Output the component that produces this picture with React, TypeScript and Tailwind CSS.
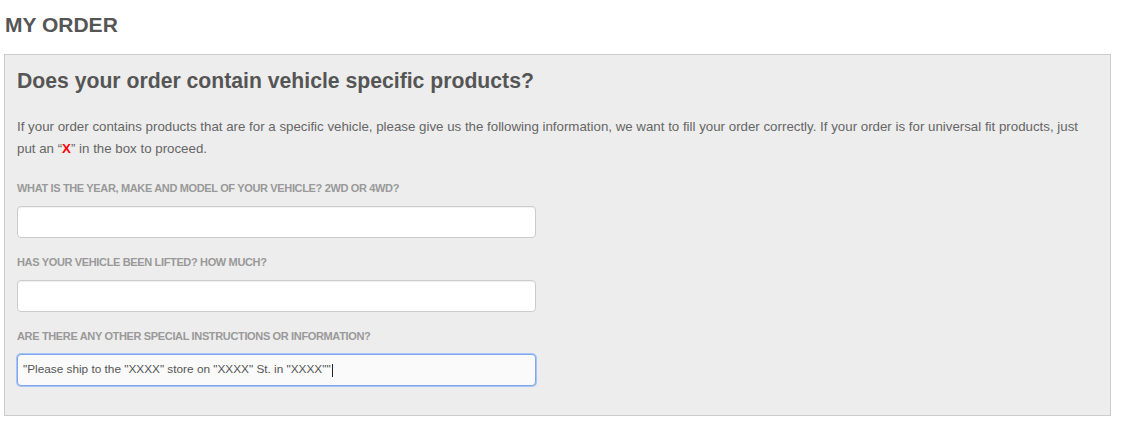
// Order form: vehicle specific products panel
const font = { fontFamily: '"Liberation Sans", Arial, sans-serif' };

type FieldProps = {
  label: string;
  children: React.ReactNode;
};

function Field({ label, children }: FieldProps) {
  return (
    <div className="mt-[17px] first:mt-[21px]">
      <label className="block text-[11px] leading-[14px] font-bold uppercase tracking-[-0.35px] text-[#999]">
        {label}
      </label>
      <div className="mt-[11px]">{children}</div>
    </div>
  );
}

function TextBox() {
  return (
    <div className="h-[32px] w-[519px] rounded-[4px] border border-[#ccc] bg-white shadow-[inset_0_1px_1px_rgba(0,0,0,0.06)]" />
  );
}

export default function App() {
  return (
    <div className="min-h-[422px] bg-white pl-[4px] pr-[12px] pt-[13px]" style={font}>
      {/* Page title */}
      <h1 className="pl-[1px] text-[21px] leading-[24px] font-bold text-[#555]">MY ORDER</h1>

      {/* Panel */}
      <div className="mt-[17px] border border-[#ccc] bg-[#ededed] px-[12px] pt-[12px] pb-[29px]">
        <h2 className="text-[21.2px] leading-[28px] font-bold text-[#555]">
          Does your order contain vehicle specific products?
        </h2>

        <p className="mt-[21px] text-[13.3px] leading-[22px] text-[#666]">
          If your order contains products that are for a specific vehicle, please give us the
          following information, we want to fill your order correctly. If your order is for
          universal fit products, just
          <br />
          put an “<span className="font-bold text-[#f00]">X</span>” in the box to proceed.
        </p>

        <div className="flex flex-col">
          <Field label="What is the year, make and model of your vehicle? 2WD or 4WD?">
            <TextBox />
          </Field>
          <Field label="Has your vehicle been lifted? How much?">
            <TextBox />
          </Field>
          <Field label="Are there any other special instructions or information?">
            <div className="flex h-[32px] w-[519px] items-center rounded-[4px] border border-[#7fa7ee] bg-[#fafafa] pl-[5px] text-[11.8px] text-[#555] shadow-[0_0_0_1px_#a8c4f4]">
              <span>"Please ship to the "XXXX" store on "XXXX" St. in "XXXX""</span>
              <span className="ml-[1px] h-[13px] w-[1px] bg-[#222]" />
            </div>
          </Field>
        </div>
      </div>
    </div>
  );
}
